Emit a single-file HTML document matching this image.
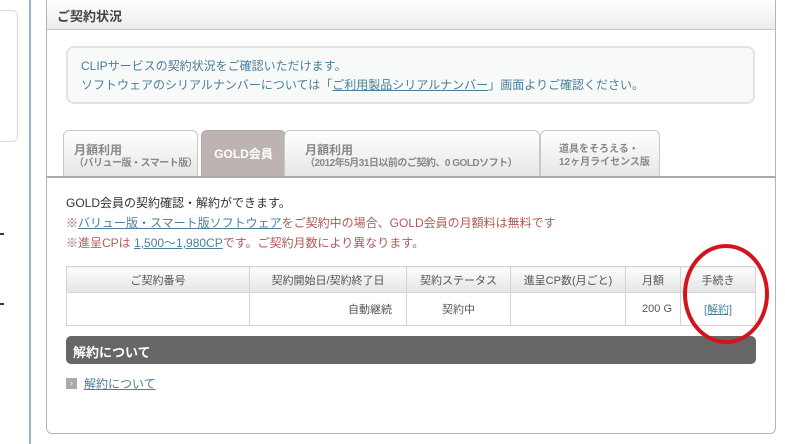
<!DOCTYPE html>
<html><head><meta charset="utf-8"><style>
*{margin:0;padding:0;box-sizing:border-box}
body{width:785px;height:444px;background:#fff;font-family:"Liberation Sans","Noto Sans CJK JP",sans-serif;font-size:12px;color:#333;position:relative;overflow:hidden}
.a{position:absolute}
a{color:#4a7f99;text-decoration:underline}
.tab{position:absolute;top:130px;height:47px;border:1px solid #c8c8c8;border-bottom:none;border-radius:6px 6px 0 0;background:linear-gradient(#fff,#e6e6e6);color:#888;font-weight:bold;font-size:12px;line-height:13px;padding-top:13px;white-space:nowrap}
.tab small{font-size:10px;display:block;letter-spacing:-0.5px}
table{border-collapse:collapse;position:absolute;left:66px;top:266px;width:690px;font-size:11px;color:#555}
td{border:1px solid #d4d4d4;text-align:center}
tr.h td{height:26px;background:linear-gradient(#fdfdfd,#e4e4e4)}
tr.r td{height:33px}
</style></head><body>
<div class="a" style="left:-10px;top:10px;width:28px;height:132px;border:1px solid #dcdcdc;border-radius:6px;background:#fff"></div>
<div class="a" style="left:0;top:221px;width:4px;border-bottom:2px solid #335;height:14px"></div>
<div class="a" style="left:0;top:291px;width:4px;border-bottom:2px solid #335;height:14px"></div>
<div class="a" style="left:29px;top:0;width:2px;height:444px;background:#9ab3c0"></div>
<div class="a" style="left:46px;top:-6px;width:730px;height:440px;border:1px solid #b4b4b4;border-radius:6px;background:#fff"></div>
<div class="a" style="left:47px;top:0;width:728px;height:30px;background:linear-gradient(#fff,#ececec);border-bottom:1px solid #c8c8c8;font-size:13px;font-weight:bold;color:#444;padding:6px 10px">ご契約状況</div>
<div class="a" style="left:66px;top:46px;width:689px;height:58px;border:2px solid #e2e4e4;border-radius:8px;background:#f8f9f9;color:#4a7f99;padding:9px 13px;line-height:19px;font-size:12px">CLIPサービスの契約状況をご確認いただけます。<br>ソフトウェアのシリアルナンバーについては「<a>ご利用製品シリアルナンバー</a>」画面よりご確認ください。</div>
<div class="tab" style="left:63px;width:135px;padding-left:10px">月額利用<small>（バリュー版・スマート版）</small></div>
<div class="tab" style="left:201px;width:85px;background:#bdb3b1;color:#fff;text-align:center;padding-top:17px;border-color:#aaa">GOLD会員</div>
<div class="tab" style="left:284px;width:256px;padding-left:20px">月額利用<small>（2012年5月31日以前のご契約、0 GOLDソフト）</small></div>
<div class="tab" style="left:540px;width:120px;padding-left:18px;font-size:10px;padding-top:12px">道具をそろえる・<br>12ヶ月ライセンス版</div>
<div class="a" style="left:47px;top:176px;width:728px;height:2px;background:#aaa"></div>
<div class="a" style="left:66px;top:193px;line-height:20px;font-size:12px">GOLD会員の契約確認・解約ができます。<br><span style="color:#b05a5a">※<a>バリュー版・スマート版ソフトウェア</a>をご契約中の場合、GOLD会員の月額料は無料です<br>※進呈CPは <a>1,500〜1,980CP</a>です。ご契約月数により異なります。</span></div>
<table><tr class="h"><td style="width:183px">ご契約番号</td><td style="width:157px">契約開始日/契約終了日</td><td style="width:104px">契約ステータス</td><td style="width:115px">進呈CP数(月ごと)</td><td style="width:55px">月額</td><td>手続き</td></tr>
<tr class="r"><td></td><td style="text-align:right;padding-right:14px">自動継続</td><td>契約中</td><td></td><td style="text-align:right;padding-right:8px">200 G</td><td><a>[解約]</a></td></tr></table>
<div class="a" style="left:66px;top:336px;width:690px;height:28px;background:#666;border-radius:5px;color:#fff;font-weight:bold;font-size:13px;padding:6px 7px">解約について</div>
<div class="a" style="left:66px;top:378px;width:11px;height:11px;background:#aaa;color:#fff;font-size:9px;line-height:11px;text-align:center">›</div>
<div class="a" style="left:84px;top:375px;font-size:12px"><a>解約について</a></div>
<svg class="a" style="left:670px;top:230px" width="110" height="130"><ellipse cx="56" cy="64" rx="41" ry="48" fill="none" stroke="#d4141c" stroke-width="4"/></svg>
</body></html>
